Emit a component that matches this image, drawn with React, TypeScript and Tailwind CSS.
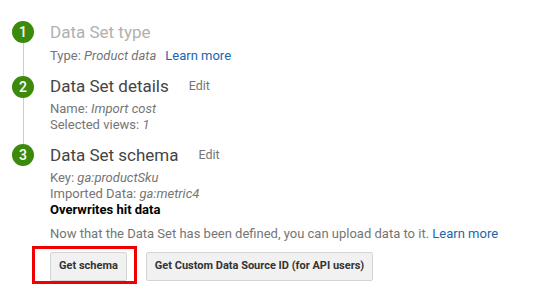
import React from "react";

const Circle: React.FC<{ n: number }> = ({ n }) => (
	<div className="w-[22px] h-[22px] shrink-0 rounded-full bg-[#3b8a0c] text-white text-[14px] font-medium flex items-center justify-center leading-none">
		{n}
	</div>
);

const App: React.FC = () => {
	return (
		<div className="w-[537px] h-[287px] bg-white font-['Roboto',sans-serif] text-[13px] text-[#757575] pl-3 pt-[21px]">
			{/* Step 1 */}
			<div className="flex">
				<div className="flex flex-col items-center w-[22px]">
					<Circle n={1} />
					<div className="flex-1 w-px bg-[#cccccc]"></div>
				</div>
				<div className="ml-4 pb-[11px]">
					<h3 className="text-[17px] leading-[22px] text-[#b0b0b0]">Data Set type</h3>
					<p className="mt-[5px] leading-4">
						Type: <i>Product data</i>
						<a className="ml-[9px] text-[#1a66ad]">Learn more</a>
					</p>
				</div>
			</div>

			{/* Step 2 */}
			<div className="flex">
				<div className="flex flex-col items-center w-[22px]">
					<div className="h-[1px] w-px bg-[#cccccc]"></div>
					<Circle n={2} />
					<div className="flex-1 w-px bg-[#cccccc]"></div>
				</div>
				<div className="ml-4 pb-[11px]">
					<h3 className="text-[17px] leading-[22px] text-[#444] flex items-center">
						Data Set details
						<span className="ml-5 text-[12.5px] text-[#757575]">Edit</span>
					</h3>
					<p className="mt-[4px] leading-4">
						Name: <i>Import cost</i>
					</p>
					<p className="leading-4">
						Selected views: <i>1</i>
					</p>
				</div>
			</div>

			{/* Step 3 */}
			<div className="flex">
				<div className="flex flex-col items-center w-[22px]">
					<Circle n={3} />
				</div>
				<div className="ml-4">
					<h3 className="text-[17px] leading-[22px] text-[#444] flex items-center">
						Data Set schema
						<span className="ml-5 text-[12.5px] text-[#757575]">Edit</span>
					</h3>
					<p className="mt-1 leading-4">
						Key: <i>ga:productSku</i>
					</p>
					<p className="leading-4">
						Imported Data: <i>ga:metric4</i>
					</p>
					<p className="leading-4 font-bold text-black">Overwrites hit data</p>
					<p className="mt-2 leading-4">
						Now that the Data Set has been defined, you can upload data to it.{" "}
						<a className="text-[#1a66ad]">Learn more</a>
					</p>
					<div className="relative mt-[10px] flex gap-[19px]">
						<button className="h-[29px] px-2 rounded-[2px] border border-[#d4d4d4] bg-[#f1f1f1] text-[11px] font-bold text-[#333]">
							Get schema
						</button>
						<button className="h-[29px] px-2 rounded-[2px] border border-[#d4d4d4] bg-[#f1f1f1] text-[11px] font-bold text-[#333]">
							Get Custom Data Source ID (for API users)
						</button>
						{/* highlight annotation */}
						<div className="absolute left-[-18px] top-[-6px] w-[105px] h-[38px] border-[3px] border-[#f00000]"></div>
					</div>
				</div>
			</div>
		</div>
	);
};

export default App;
